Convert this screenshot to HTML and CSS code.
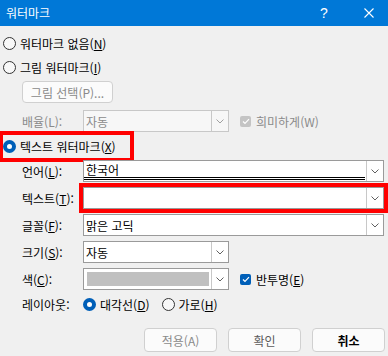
FILE: index.html
```html
<!DOCTYPE html>
<html lang="ko">
<head>
<meta charset="utf-8">
<link rel="stylesheet" href="styles.css">
</head>
<body>
<div class="dialog">
  <div class="titlebar">
    <span class="title">워터마크</span>
    <span class="help">?</span>
    <span class="close"><svg width="10" height="10" viewBox="0 0 10 10"><path d="M0.5 0.5L9.5 9.5M9.5 0.5L0.5 9.5" stroke="#fff" stroke-width="1.1" fill="none"/></svg></span>
  </div>
  <div class="content">
    <div class="radio-row row-none"><span class="radio"></span><span>워터마크 없음(<u>N</u>)</span></div>
    <div class="radio-row row-pic"><span class="radio"></span><span>그림 워터마크(<u>I</u>)</span></div>
    <div class="pic-row"><span class="btn pic-btn">그림 선택(P)...</span></div>
    <div class="field-row row-scale">
      <span class="label dis">배율(L):</span>
      <div class="combo short dis"><span class="value">자동</span><span class="drop"><svg width="8" height="5" viewBox="0 0 8 5"><path d="M0.5 0.5L4 4L7.5 0.5" stroke="#a0a0a0" fill="none"/></svg></span></div>
      <span class="check check-dis"><svg width="8" height="7" viewBox="0 0 8 7"><path d="M1 3.5L3 5.5L7 1.2" stroke="#fff" stroke-width="1.2" fill="none"/></svg></span>
      <span class="dis">희미하게(W)</span>
    </div>
    <div class="radio-row row-text mark"><span class="radio on"></span><span>텍스트 워터마크(<u>X</u>)</span></div>
    <div class="field-row row-lang">
      <span class="label">언어(<u>L</u>):</span>
      <div class="combo full"><span class="value lang">한국어</span><span class="drop"><svg width="8" height="5" viewBox="0 0 8 5"><path d="M0.5 0.5L4 4L7.5 0.5" stroke="#606060" fill="none"/></svg></span></div>
    </div>
    <div class="field-row row-gap5">
      <span class="label">텍스트(<u>T</u>):</span>
      <div class="combo full mark"><span class="value"></span><span class="drop"><svg width="8" height="5" viewBox="0 0 8 5"><path d="M0.5 0.5L4 4L7.5 0.5" stroke="#606060" fill="none"/></svg></span></div>
    </div>
    <div class="field-row row-gap5">
      <span class="label">글꼴(<u>F</u>):</span>
      <div class="combo full"><span class="value">맑은 고딕</span><span class="drop"><svg width="8" height="5" viewBox="0 0 8 5"><path d="M0.5 0.5L4 4L7.5 0.5" stroke="#606060" fill="none"/></svg></span></div>
    </div>
    <div class="field-row row-gap5">
      <span class="label">크기(<u>S</u>):</span>
      <div class="combo short"><span class="value">자동</span><span class="drop"><svg width="8" height="5" viewBox="0 0 8 5"><path d="M0.5 0.5L4 4L7.5 0.5" stroke="#606060" fill="none"/></svg></span></div>
    </div>
    <div class="field-row row-gap5">
      <span class="label">색(<u>C</u>):</span>
      <div class="combo short"><span class="value"><span class="swatch"></span></span><span class="drop"><svg width="8" height="5" viewBox="0 0 8 5"><path d="M0.5 0.5L4 4L7.5 0.5" stroke="#606060" fill="none"/></svg></span></div>
      <span class="check check-on"><svg width="8" height="7" viewBox="0 0 8 7"><path d="M1 3.5L3 5.5L7 1.2" stroke="#fff" stroke-width="1.2" fill="none"/></svg></span>
      <span>반투명(<u>E</u>)</span>
    </div>
    <div class="field-row row-layout">
      <span class="label">레이아웃:</span>
      <span class="radio on"></span><span class="opt">대각선(<u>D</u>)</span>
      <span class="radio r-second"></span><span class="opt">가로(<u>H</u>)</span>
    </div>
    <div class="buttons">
      <span class="btn foot dis">적용(A)</span>
      <span class="btn foot ok">확인</span>
      <span class="btn foot cancel">취소</span>
    </div>
  </div>
</div>
</body>
</html>
```

FILE: styles.css
```css
* { box-sizing: border-box; }
html, body {
  margin: 0;
  padding: 0;
  background: #f0f0f0;
}
body {
  font-family: "Noto Sans CJK KR", "Noto Sans", sans-serif;
  font-size: 12px;
  color: #000;
  width: 388px;
  height: 356px;
  overflow: hidden;
}
u { text-underline-offset: 1px; }
.dialog { width: 388px; height: 356px; }
.titlebar {
  height: 26px;
  background: #0078d7;
  color: #fff;
  display: flex;
  align-items: center;
  padding-left: 6px;
}
.title { font-size: 12px; line-height: 26px; flex: 1; }
.help { width: 10px; font-family: "Liberation Sans", sans-serif; font-size: 14px; line-height: 26px; margin-right: 34px; }
.close { width: 10px; height: 10px; margin-right: 14px; display: flex; }
.content { padding-left: 3px; display: flex; flex-direction: column; }
.radio-row {
  display: flex;
  align-items: center;
  height: 22px;
  gap: 4px;
  align-self: flex-start;
}
.row-none { margin-top: 6px; }
.row-pic { margin-top: 2px; }
.radio {
  width: 13px;
  height: 13px;
  border: 1px solid #333;
  border-radius: 50%;
  background: #f8f8f8;
  flex: none;
}
.radio.on {
  border: 4px solid #005fb8;
  background: #fff;
}
.pic-row { padding-left: 19px; margin-top: 3px; }
.btn {
  display: inline-flex;
  align-items: center;
  justify-content: center;
  border: 1px solid #d0d0d0;
  border-radius: 4px;
  background: #fbfbfb;
}
.pic-btn { width: 91px; height: 22px; color: #8a8a8a; }
.field-row {
  display: flex;
  align-items: center;
  height: 22px;
  padding-left: 19px;
}
.row-scale { margin-top: 7px; }
.label { width: 61px; flex: none; }
.dis { color: #8a8a8a; }
.combo {
  height: 22px;
  background: #fff;
  border: 1px solid #9a9a9a;
  display: flex;
  flex: none;
}
.combo.short { width: 146px; }
.combo.full { width: 301px; }
.combo.dis { background: #f7f7f7; border-color: #c8c8c8; }
.value {
  flex: 1;
  display: flex;
  align-items: center;
  padding-left: 2px;
  padding-right: 2px;
}
.value.lang {
  border-bottom: 3px double #000;
  margin-bottom: 1px;
  margin-right: 1px;
}
.swatch {
  display: block;
  width: 122px;
  height: 14px;
  background: #c0c0c0;
  margin-left: 1px;
}
.drop {
  width: 17px;
  flex: none;
  border-left: 1px solid #c8c8c8;
  display: flex;
  align-items: center;
  justify-content: center;
}
.row-text { margin-top: 3px; height: 23px; width: 127px; gap: 4px; }
.mark { outline: 4px solid #ff0000; }
.row-lang { margin-top: 2px; }
.row-gap5 { margin-top: 5px; }
.check {
  width: 11px;
  height: 11px;
  border-radius: 2px;
  margin-left: 11px;
  margin-right: 5px;
  display: flex;
  align-items: center;
  justify-content: center;
  flex: none;
}
.check-dis { background: #c4c4c4; }
.check-on { background: #005fb8; }
.row-layout { margin-top: 3px; }
.opt { margin-left: 4px; }
.r-second { margin-left: 12px; }
.buttons {
  display: flex;
  justify-content: flex-end;
  gap: 11px;
  padding-right: 3px;
  margin-top: 13px;
}
.foot { width: 73px; height: 24px; }
.ok { color: #5a5a5a; }
.cancel { font-weight: bold; }
```
